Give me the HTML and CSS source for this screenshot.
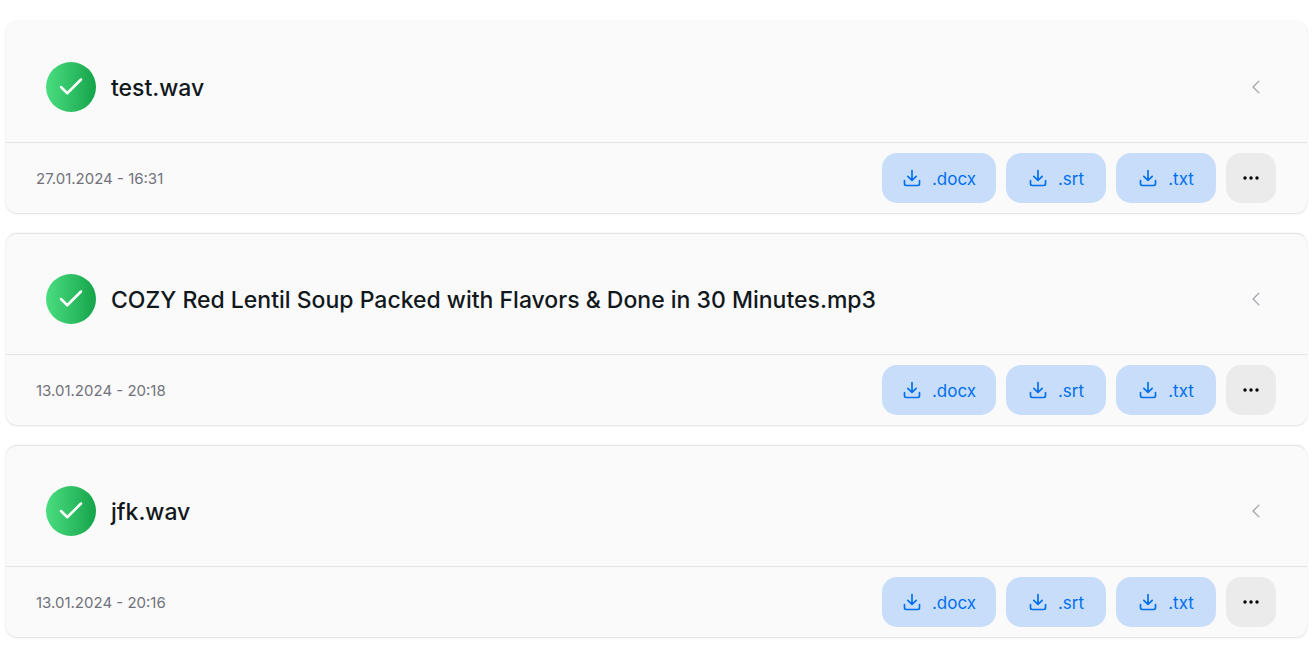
FILE: index.html
```
<!DOCTYPE html>
<html lang="en">
<head>
<meta charset="utf-8">
<title>Transcriptions</title>
<link rel="stylesheet" href="styles.css">
</head>
<body>
<svg class="sprite" aria-hidden="true">
  <symbol id="check" viewBox="0 0 24 24"><path d="M20 6 9 17l-5-5"/></symbol>
  <symbol id="chevron" viewBox="0 0 24 24"><path d="M15.5 19 8.5 12l7-7"/></symbol>
  <symbol id="download" viewBox="0 0 24 24"><path d="M3 15v4a2 2 0 0 0 2 2h14a2 2 0 0 0 2-2v-4M7 10l5 5 5-5M12 15V3"/></symbol>
  <symbol id="dots" viewBox="0 0 18 18"><circle cx="3" cy="9" r="1.700"/><circle cx="9" cy="9" r="1.700"/><circle cx="15" cy="9" r="1.700"/></symbol>
</svg>
<main class="list">
  <article class="card">
    <header class="card-header">
      <span class="status"><svg class="check"><use href="#check"/></svg></span>
      <h2 class="title">test.wav</h2>
      <button class="toggle" aria-label="Expand"><svg class="chevron"><use href="#chevron"/></svg></button>
    </header>
    <footer class="card-footer">
      <time class="date">27.01.2024 - 16:31</time>
      <button class="button"><svg class="download"><use href="#download"/></svg><span class="label">.docx</span></button>
      <button class="button"><svg class="download"><use href="#download"/></svg><span class="label">.srt</span></button>
      <button class="button"><svg class="download"><use href="#download"/></svg><span class="label">.txt</span></button>
      <button class="button more" aria-label="More"><svg class="dots"><use href="#dots"/></svg></button>
    </footer>
  </article>
  <article class="card">
    <header class="card-header">
      <span class="status"><svg class="check"><use href="#check"/></svg></span>
      <h2 class="title">COZY Red Lentil Soup Packed with Flavors &amp; Done in 30 Minutes.mp3</h2>
      <button class="toggle" aria-label="Expand"><svg class="chevron"><use href="#chevron"/></svg></button>
    </header>
    <footer class="card-footer">
      <time class="date">13.01.2024 - 20:18</time>
      <button class="button"><svg class="download"><use href="#download"/></svg><span class="label">.docx</span></button>
      <button class="button"><svg class="download"><use href="#download"/></svg><span class="label">.srt</span></button>
      <button class="button"><svg class="download"><use href="#download"/></svg><span class="label">.txt</span></button>
      <button class="button more" aria-label="More"><svg class="dots"><use href="#dots"/></svg></button>
    </footer>
  </article>
  <article class="card">
    <header class="card-header">
      <span class="status"><svg class="check"><use href="#check"/></svg></span>
      <h2 class="title">jfk.wav</h2>
      <button class="toggle" aria-label="Expand"><svg class="chevron"><use href="#chevron"/></svg></button>
    </header>
    <footer class="card-footer">
      <time class="date">13.01.2024 - 20:16</time>
      <button class="button"><svg class="download"><use href="#download"/></svg><span class="label">.docx</span></button>
      <button class="button"><svg class="download"><use href="#download"/></svg><span class="label">.srt</span></button>
      <button class="button"><svg class="download"><use href="#download"/></svg><span class="label">.txt</span></button>
      <button class="button more" aria-label="More"><svg class="dots"><use href="#dots"/></svg></button>
    </footer>
  </article>
</main>
</body>
</html>
```
FILE: styles.css
```
* { box-sizing: border-box; }
body { margin: 0; background: #fff; font-family: Inter, sans-serif; color: #11181c; }
.sprite { display: none; }
.list { display: flex; flex-direction: column; gap: 20px; padding: 21px 6px 8px; }
.card { background: #fafafa; border-top: 1px solid #e4e4e7; border-radius: 11px; box-shadow: 0 0 3px rgba(0,0,0,.05), 0 1px 2px rgba(0,0,0,.1); }
.card:first-child { border-top-color: #fafafa; }
.card-header { display: flex; align-items: center; gap: 15px; height: 121px; padding: 10px 41px 0 40px; border-bottom: 1px solid #e4e4e7; }
.status { display: flex; align-items: center; justify-content: center; width: 50px; height: 50px; border-radius: 50%; background: linear-gradient(90deg, #4ade80, #16a34a); }
svg { fill: none; stroke: currentColor; stroke-width: 2; stroke-linecap: round; stroke-linejoin: round; }
.check { width: 30px; height: 30px; color: #fff; }
.title { flex: 1; margin: 0; padding-top: 2px; font-size: 23px; line-height: 30px; font-weight: 500; }
.toggle { display: flex; padding: 0; border: 0; background: none; color: #a1a1aa; }
.chevron { width: 20px; height: 20px; stroke-width: 1.5; }
.card-footer { display: flex; align-items: center; gap: 10px; padding: 10px 31px 10px 30px; }
.date { margin-right: auto; padding-top: 2px; font-size: 15px; line-height: 22px; color: #71717a; }
.button { display: flex; align-items: center; justify-content: center; gap: 10px; min-width: 100px; height: 50px; padding: 0 20px; border: 0; border-radius: 15px; background: #c8ddf9; color: #006fee; font: 400 17px/28px Inter, sans-serif; }
.label { padding-top: 2px; }
.download { width: 20px; height: 20px; }
.more { width: 50px; min-width: 0; padding: 0; background: #ebebec; color: #000; }
.dots { width: 18px; height: 18px; fill: currentColor; stroke: none; }
```
